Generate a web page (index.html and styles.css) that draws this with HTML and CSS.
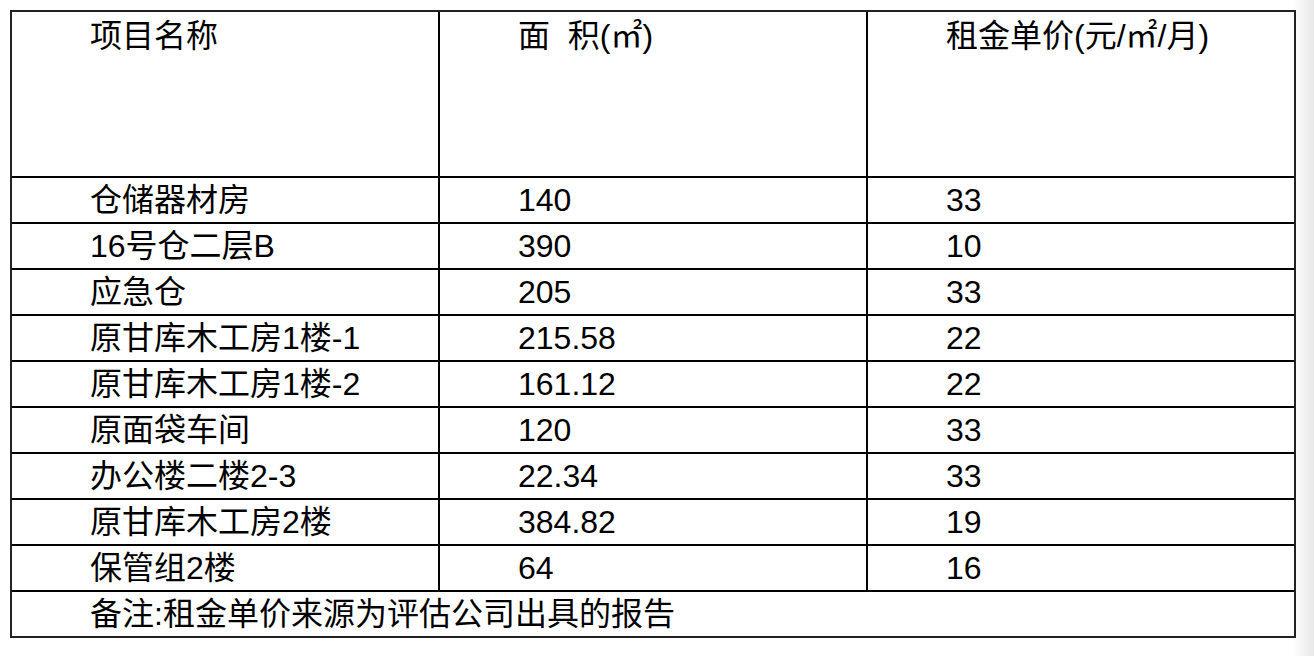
FILE: index.html
```html
<!DOCTYPE html>
<html lang="zh-CN">
<head>
<meta charset="utf-8">
<title>租金单价</title>
<link rel="stylesheet" href="styles.css">
</head>
<body>
<table class="rent">
  <colgroup>
    <col class="c1"><col class="c2"><col class="c3">
  </colgroup>
  <thead>
    <tr class="head">
      <th>项目名称</th>
      <th>面&nbsp;&nbsp;积(㎡)</th>
      <th class="last">租金单价(元/㎡/月)</th>
    </tr>
  </thead>
  <tbody>
    <tr><td>仓储器材房</td><td>140</td><td class="last">33</td></tr>
    <tr><td>16号仓二层B</td><td>390</td><td class="last">10</td></tr>
    <tr><td>应急仓</td><td>205</td><td class="last">33</td></tr>
    <tr><td>原甘库木工房1楼-1</td><td>215.58</td><td class="last">22</td></tr>
    <tr><td>原甘库木工房1楼-2</td><td>161.12</td><td class="last">22</td></tr>
    <tr><td>原面袋车间</td><td>120</td><td class="last">33</td></tr>
    <tr><td>办公楼二楼2-3</td><td>22.34</td><td class="last">33</td></tr>
    <tr><td>原甘库木工房2楼</td><td>384.82</td><td class="last">19</td></tr>
    <tr><td>保管组2楼</td><td>64</td><td class="last">16</td></tr>
    <tr class="note"><td colspan="3">备注:租金单价来源为评估公司出具的报告</td></tr>
  </tbody>
</table>
</body>
</html>
```

FILE: styles.css
```css
html {
  background: linear-gradient(90deg, #ffffff 0, #ffffff 1292px, #e8e8e8 1314px);
  min-height: 100%;
}
body {
  margin: 10px;
  font-family: "Liberation Sans", "Noto Sans CJK SC", sans-serif;
  font-size: 32px;
  color: #000;
}
.rent {
  border-collapse: separate;
  border-spacing: 0;
  table-layout: fixed;
  width: 1286px;
  border: 2px solid #222;
}
.c1, .c2 { width: 428px; }
.c3 { width: 426px; }
.rent th,
.rent td {
  padding: 0 0 0 78px;
  text-align: left;
  font-weight: normal;
  line-height: 44px;
  height: 44px;
  white-space: nowrap;
  border-right: 2px solid #000;
  border-bottom: 2px solid #000;
  box-sizing: content-box;
  vertical-align: middle;
}
.rent th.last,
.rent td.last { border-right: 0; }
.rent .head th {
  height: 162px;
  padding-top: 2px;
  vertical-align: top;
}
.rent .note td {
  border-right: 0;
  border-bottom: 0;
}
```
